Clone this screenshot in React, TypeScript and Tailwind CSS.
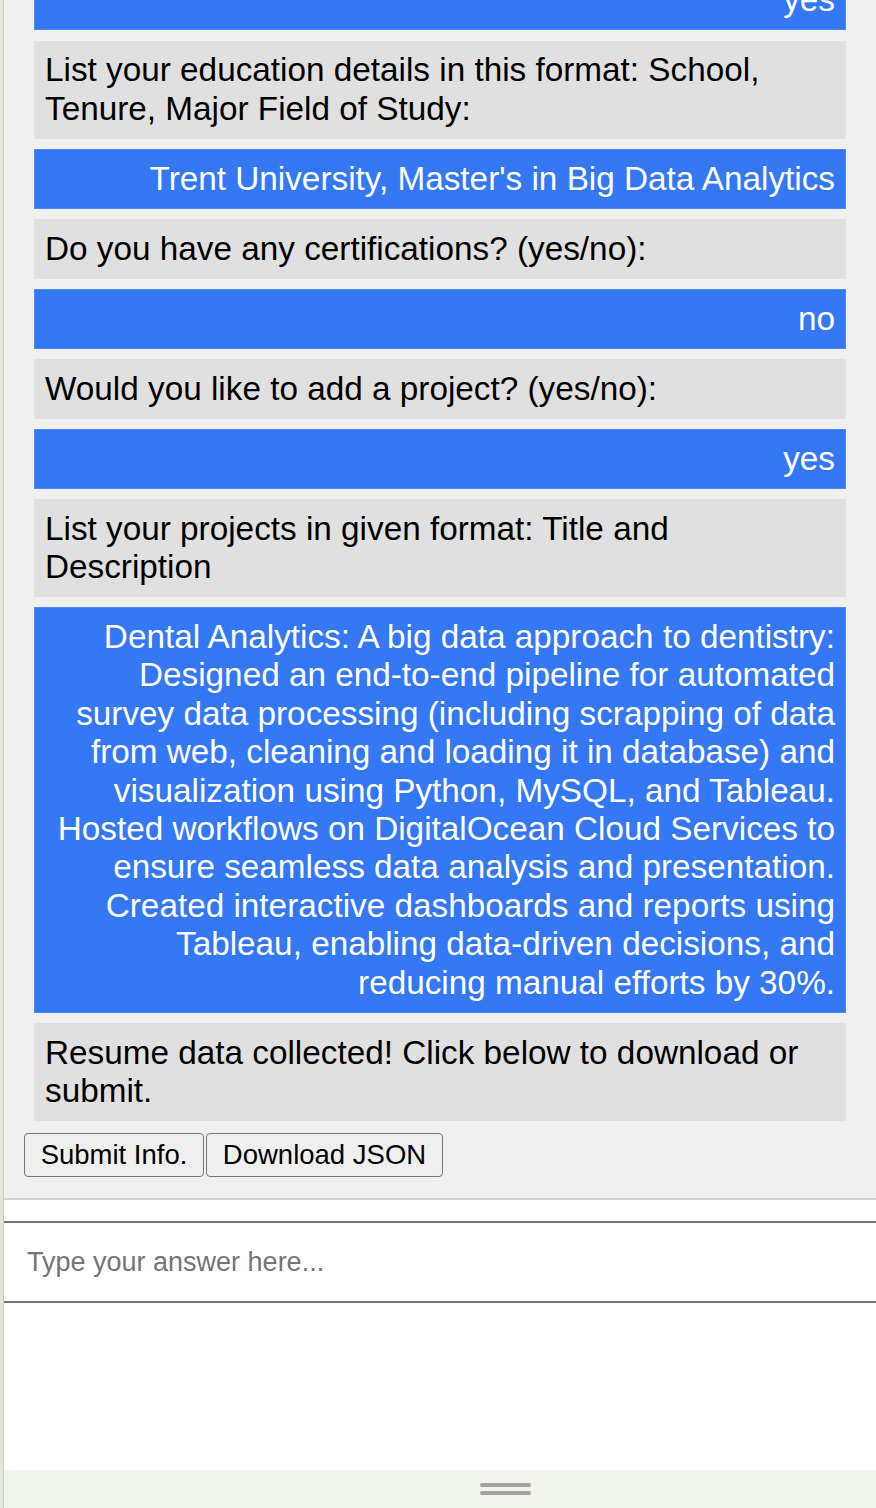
const messages: { from: "bot" | "user"; text: string }[] = [
  { from: "user", text: "yes" },
  { from: "bot", text: "List your education details in this format: School, Tenure, Major Field of Study:" },
  { from: "user", text: "Trent University, Master's in Big Data Analytics" },
  { from: "bot", text: "Do you have any certifications? (yes/no):" },
  { from: "user", text: "no" },
  { from: "bot", text: "Would you like to add a project? (yes/no):" },
  { from: "user", text: "yes" },
  { from: "bot", text: "List your projects in given format: Title and Description" },
  {
    from: "user",
    text: "Dental Analytics: A big data approach to dentistry: Designed an end-to-end pipeline for automated survey data processing (including scrapping of data from web, cleaning and loading it in database) and visualization using Python, MySQL, and Tableau. Hosted workflows on DigitalOcean Cloud Services to ensure seamless data analysis and presentation. Created interactive dashboards and reports using Tableau, enabling data-driven decisions, and reducing manual efforts by 30%.",
  },
  { from: "bot", text: "Resume data collected! Click below to download or submit." },
]

function Bubble({ from, text }: { from: "bot" | "user"; text: string }) {
  if (from === "user") {
    return (
      <div className="mx-[10px] shrink-0 border border-[#4f8bf7] bg-[#3478f6] px-[10px] py-[9.6px] text-right text-white">
        {text}
      </div>
    )
  }
  return <div className="mx-[10px] shrink-0 bg-[#e0e0e0] px-[11px] py-[10.6px] text-black">{text}</div>
}

export default function App() {
  return (
    <div className="flex h-[1508px] w-full overflow-hidden bg-white font-['Liberation_Sans',Arial,sans-serif]">
      <div className="w-[3px] shrink-0 border-r border-[#c9cec5] bg-[#e2e7dc] box-content" />
      <div className="flex min-w-0 flex-1 flex-col">
        <div className="flex h-[1200px] shrink-0 flex-col justify-end overflow-hidden border-b-2 border-[#d2d2d2] bg-[#f0f0f0] px-[20px] pb-[21px]">
          <div className="flex flex-col gap-[10.4px] text-[33.3px] leading-[38.4px]">
            {messages.map((m, i) => (
              <Bubble key={i} from={m.from} text={m.text} />
            ))}
          </div>
          <div className="mt-[12px] flex gap-[2px]">
            <button className="h-[44px] w-[180px] rounded-[4px] border border-[#767676] bg-[#efefef] text-[27.5px] text-black">
              Submit Info.
            </button>
            <button className="h-[44px] w-[237px] rounded-[4px] border border-[#767676] bg-[#efefef] text-[27.5px] text-black">
              Download JSON
            </button>
          </div>
        </div>
        <div className="flex-1 bg-white pt-[21px]">
          <input
            placeholder="Type your answer here..."
            className="h-[82px] w-full border-y-2 border-[#767676] bg-white px-[23px] text-[27px] text-black outline-none placeholder:text-[#757575]"
          />
        </div>
        <div className="flex h-[38px] shrink-0 flex-col justify-center gap-[4px] bg-[#f1f4ec] pl-[476px]">
          <div className="h-[4px] w-[51px] rounded-full bg-[#a3a3a3]" />
          <div className="h-[4px] w-[51px] rounded-full bg-[#a3a3a3]" />
        </div>
      </div>
    </div>
  )
}
